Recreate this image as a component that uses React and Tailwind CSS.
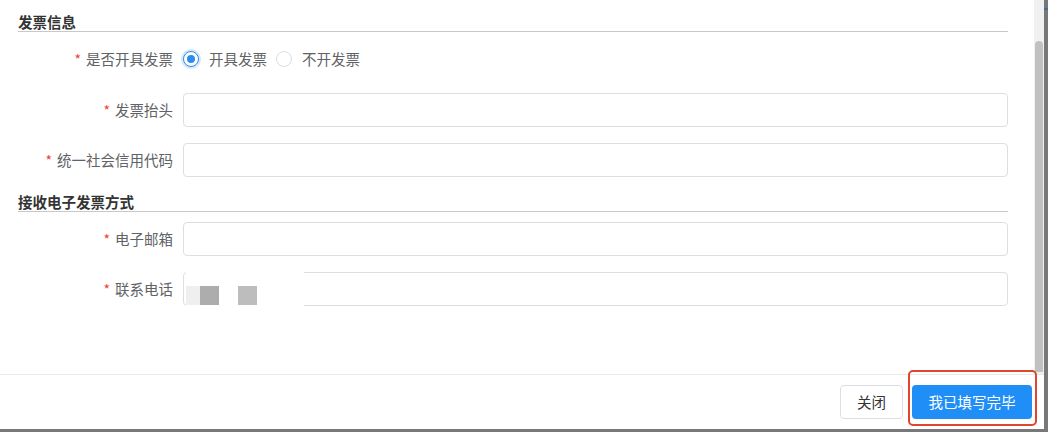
import React from 'react';

const FONT = { fontFamily: '"Noto Sans CJK SC", "Noto Sans", sans-serif' };

const Label = ({ children }) => (
  <div className="w-[165px] shrink-0 pr-[10px] flex justify-end items-center text-[14.5px] text-[#606266]">
    <span className="text-[#f04134] mr-[5px] text-[14px] leading-none">*</span>
    <span>{children}</span>
  </div>
);

const Radio = ({ checked, children }) => (
  <label className="flex items-center mr-[9px] text-[14.5px] text-[#606266]">
    <span
      className={
        checked
          ? 'w-[16px] h-[16px] rounded-full border border-[#2d8cf0] bg-white flex items-center justify-center shadow-[0_0_0_2px_rgba(45,140,240,0.2)]'
          : 'w-[16px] h-[16px] rounded-full border border-[#dcdee2] bg-white'
      }
    >
      {checked && <span className="w-[8px] h-[8px] rounded-full bg-[#2d8cf0]" />}
    </span>
    <span className="ml-[10px]">{children}</span>
  </label>
);

const Input = () => (
  <div className="flex-1 h-[34px] border border-[#dcdee2] rounded-[4px] bg-white" />
);

const SectionTitle = ({ children, className }) => (
  <div className={`border-b border-[#c8c8c8] text-[14.5px] font-bold text-[#333] flex items-end ${className}`}>
    <span className="leading-[19px]">{children}</span>
  </div>
);

export default function App() {
  return (
    <div className="w-[1048px] h-[432px] bg-[#787878] overflow-hidden relative" style={FONT}>
      <div className="flex h-[429px]">
        <div className="w-[1044px] h-full bg-white flex flex-col">
          {/* body */}
          <div className="h-[374px] flex">
            <div className="flex-1 pl-[18px] pr-[26px] pt-[12px]">
              <SectionTitle className="h-[20px]">发票信息</SectionTitle>

              <div className="flex h-[34px] mt-[10px]">
                <Label>是否开具发票</Label>
                <div className="flex items-center">
                  <Radio checked>开具发票</Radio>
                  <Radio>不开发票</Radio>
                </div>
              </div>

              <div className="flex h-[34px] mt-[17px]">
                <Label>发票抬头</Label>
                <Input />
              </div>

              <div className="flex h-[34px] mt-[16px]">
                <Label>统一社会信用代码</Label>
                <Input />
              </div>

              <SectionTitle className="h-[19px] mt-[16px]">接收电子发票方式</SectionTitle>

              <div className="flex h-[34px] mt-[10px]">
                <Label>电子邮箱</Label>
                <Input />
              </div>

              <div className="flex h-[34px] mt-[16px]">
                <Label>联系电话</Label>
                <div className="flex-1 relative">
                  <Input />
                  {/* masked number */}
                  <div className="absolute left-[3px] top-[-4px] w-[118px] h-[42px] bg-white flex items-end pb-[5px]">
                    <span className="w-[14px] h-[19px] bg-[#efefef]" />
                    <span className="w-[19px] h-[19px] bg-[#adadad]" />
                    <span className="w-[19px] h-[19px] bg-[#bdbdbd] ml-[19px]" />
                  </div>
                </div>
              </div>
            </div>

            {/* scrollbar */}
            <div className="w-[10px] bg-[#f1f1f1] flex flex-col">
              <div className="mt-[41px] mx-[1px] mb-[2px] flex-1 bg-[#c1c1c1] rounded-t-[4px]" />
            </div>
          </div>

          {/* footer */}
          <div className="flex-1 border-t border-[#e8eaec] flex justify-end items-start pt-[10px] pr-[12px]">
            <button className="w-[63px] h-[34px] border border-[#dcdee2] rounded-[4px] bg-white text-[14.5px] text-[#333]">
              关闭
            </button>
            <button className="w-[120px] h-[34px] ml-[9px] rounded-[4px] bg-[#1f8ef7] text-[14.5px] text-white">
              我已填写完毕
            </button>
          </div>
        </div>

        {/* right dark strip */}
        <div className="w-[4px] flex flex-col">
          <div className="h-[8px]" />
          <div className="h-[2px] bg-[#3f6d9c]" />
        </div>
      </div>

      {/* red annotation box */}
      <div className="absolute left-[908px] top-[370px] w-[129px] h-[56px] border-2 border-[#e0452f] rounded-[5px]" />
    </div>
  );
}
